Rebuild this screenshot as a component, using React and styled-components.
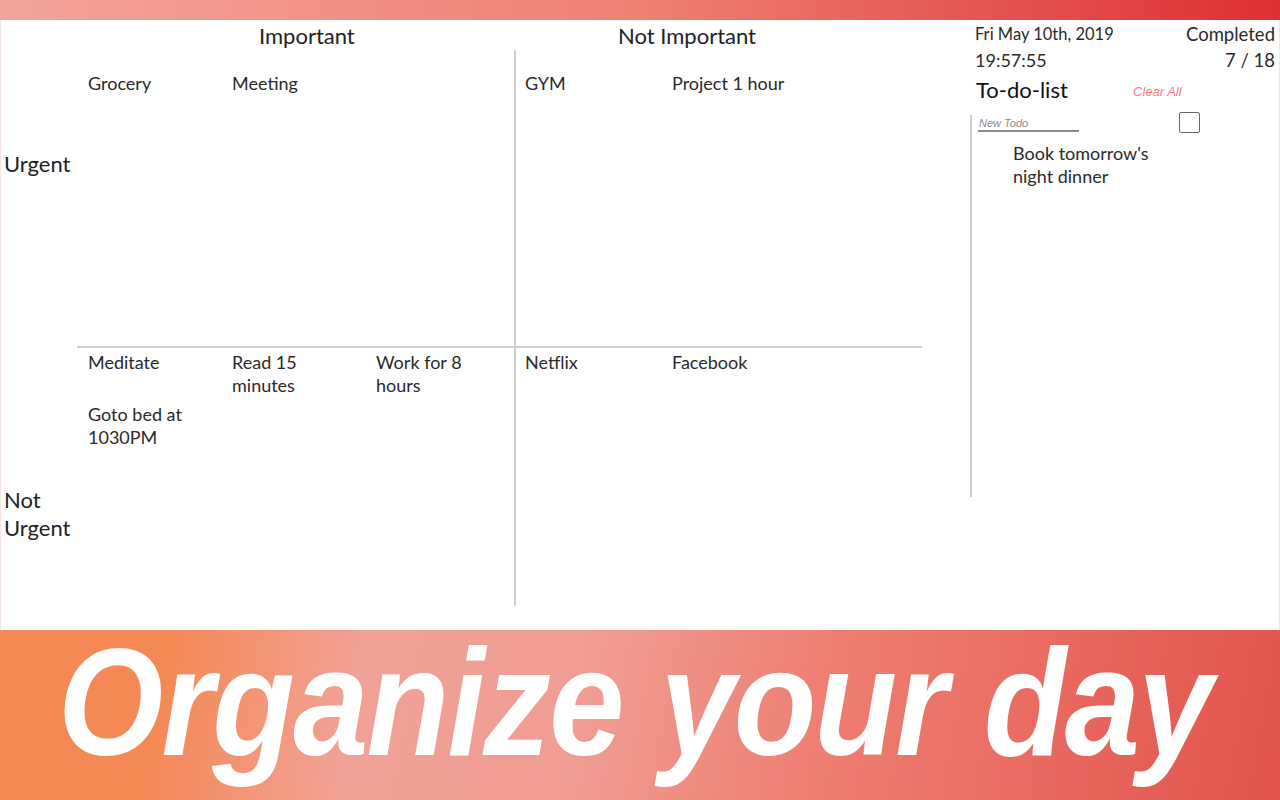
import React from "react";
import styled, { createGlobalStyle } from "styled-components";

const GlobalStyle = createGlobalStyle`
  html, body {
    margin: 0;
    padding: 0;
    background: #fff;
    font-family: Lato, "Open Sans", sans-serif;
    color: #222;
  }
`;

const quadrants = [
  { key: "ui", items: ["Grocery", "Meeting"], padTop: 22, padLeft: 11, gap: 16, divider: false, top: false },
  { key: "un", items: ["GYM", "Project 1 hour"], padTop: 22, padLeft: 9, gap: 19, divider: true, top: false },
  {
    key: "ni",
    items: ["Meditate", "Read 15 minutes", "Work for 8 hours", "Goto bed at 1030PM"],
    padTop: 3,
    padLeft: 11,
    gap: 16,
    divider: false,
    top: true,
  },
  { key: "nn", items: ["Netflix", "Facebook"], padTop: 3, padLeft: 9, gap: 19, divider: true, top: true },
];

function renderQuadrant(q) {
  return (
    <Quadrant
      key={q.key}
      padTop={q.padTop}
      padLeft={q.padLeft}
      gap={q.gap}
      divider={q.divider}
      top={q.top}
    >
      {q.items.map((it) => (
        <Task key={it}>{it}</Task>
      ))}
    </Quadrant>
  );
}

function App() {
  return (
    <Page>
      <GlobalStyle />
      <TopBar />
      <Main>
        <Matrix>
          <Corner />
          <ColHead pad={182}>Important</ColHead>
          <ColHead pad={104}>Not Important</ColHead>
          <RowHead pad={100}>Urgent</RowHead>
          {quadrants.slice(0, 2).map(renderQuadrant)}
          <RowHead pad={140}>Not Urgent</RowHead>
          {quadrants.slice(2).map(renderQuadrant)}
        </Matrix>

        <Side>
          <StatusRow>
            <Stack>
              <DateText>Fri May 10th, 2019</DateText>
              <TimeText>19:57:55</TimeText>
            </Stack>
            <Stack right>
              <CountText>Completed</CountText>
              <CountText>7 / 18</CountText>
            </Stack>
          </StatusRow>
          <TitleRow>
            <ListTitle>To-do-list</ListTitle>
            <ClearAll>Clear All</ClearAll>
          </TitleRow>
          <ListBox>
            <InputRow>
              <NewTodo placeholder="New Todo" />
              <Check />
            </InputRow>
            <TodoItem>Book tomorrow's night dinner</TodoItem>
          </ListBox>
        </Side>
      </Main>
      <Banner>
        <Slogan>Organize your day</Slogan>
      </Banner>
    </Page>
  );
}

const Page = styled.div`
  width: 1280px;
  height: 800px;
  overflow: hidden;
  display: flex;
  flex-direction: column;
`;

const TopBar = styled.div`
  height: 20px;
  flex: none;
  background: linear-gradient(90deg, #f3a49b 0%, #ef8074 50%, #dc3034 100%);
`;

const Main = styled.div`
  height: 610px;
  flex: none;
  display: flex;
  border-left: 1px solid #f6e6e3;
  border-right: 1px solid #f6e6e3;
  box-sizing: border-box;
`;

const Matrix = styled.div`
  display: grid;
  grid-template-columns: 76px 437px 408px;
  grid-template-rows: 30px 296px 260px;
  flex: none;
`;

const Corner = styled.div``;

const ColHead = styled.div`
  font-size: 22px;
  line-height: 30px;
  padding-left: ${(p) => p.pad}px;
  padding-top: 1px;
  white-space: nowrap;
`;

const RowHead = styled.div`
  font-size: 22px;
  line-height: 28px;
  padding-top: ${(p) => p.pad}px;
  padding-left: 3px;
`;

const Quadrant = styled.div`
  display: grid;
  grid-template-columns: repeat(3, 128px);
  column-gap: ${(p) => p.gap}px;
  row-gap: 6px;
  align-content: start;
  padding-top: ${(p) => p.padTop}px;
  padding-left: ${(p) => p.padLeft}px;
  border-left: ${(p) => (p.divider ? "2px solid #cfcfcf" : "none")};
  border-top: ${(p) => (p.top ? "2px solid #cfcfcf" : "none")};
  box-sizing: border-box;
  overflow: hidden;
`;

const Task = styled.div`
  font-size: 18px;
  line-height: 23px;
  color: #2a2a2a;
`;

const Side = styled.div`
  flex: 1;
  padding-left: 48px;
  padding-right: 4px;
  display: flex;
  flex-direction: column;
`;

const StatusRow = styled.div`
  display: flex;
  justify-content: space-between;
  padding-top: 1px;
`;

const Stack = styled.div`
  display: flex;
  flex-direction: column;
  align-items: ${(p) => (p.right ? "flex-end" : "flex-start")};
  padding-left: ${(p) => (p.right ? 0 : 5)}px;
`;

const DateText = styled.div`
  font-size: 16.5px;
  line-height: 26px;
  color: #2a2a2a;
`;

const TimeText = styled.div`
  font-size: 18px;
  line-height: 26px;
  color: #2a2a2a;
`;

const CountText = styled.div`
  font-size: 18.5px;
  line-height: 26px;
  color: #2a2a2a;
`;

const TitleRow = styled.div`
  display: flex;
  align-items: center;
  padding-left: 6px;
  height: 33px;
`;

const ListTitle = styled.div`
  font-size: 22px;
  color: #111;
  width: 157px;
`;

const ClearAll = styled.div`
  font-family: "Liberation Sans", Arial, sans-serif;
  font-style: italic;
  font-size: 13px;
  color: #ff7a80;
  padding-top: 4px;
`;

const ListBox = styled.div`
  margin-top: 9px;
  width: 250px;
  height: 382px;
  border-left: 2px solid #cfcfcf;
  box-sizing: border-box;
  padding-left: 6px;
`;

const InputRow = styled.div`
  display: flex;
  align-items: flex-start;
`;

const NewTodo = styled.input`
  width: 100px;
  height: 15px;
  margin-top: 0;
  padding: 0 0 0 1px;
  border: none;
  border-bottom: 2px solid #8a8a8a;
  outline: none;
  font-family: "Liberation Sans", Arial, sans-serif;
  font-style: italic;
  font-size: 11px;
  &::placeholder {
    color: #8a8a8a;
  }
`;

const Check = styled.div`
  width: 19px;
  height: 19px;
  margin-left: 100px;
  margin-top: -3px;
  border: 1.5px solid #666;
  border-radius: 2px;
`;

const TodoItem = styled.div`
  width: 150px;
  margin-left: 35px;
  margin-top: 9px;
  font-size: 18px;
  line-height: 23px;
  color: #2a2a2a;
`;

const Banner = styled.div`
  height: 170px;
  flex: none;
  background: linear-gradient(
    100deg,
    #f58955 0%,
    #f58955 13%,
    #f1a196 28%,
    #f09d93 45%,
    #ee7d70 65%,
    #e2534d 100%
  );
`;

const Slogan = styled.div`
  font-family: "Liberation Sans", Arial, sans-serif;
  font-weight: 700;
  font-style: italic;
  font-size: 152px;
  line-height: 170px;
  height: 170px;
  color: #fff;
  margin-left: 58px;
  margin-top: -13px;
  white-space: nowrap;
  letter-spacing: -2px;
  word-spacing: 2px;
  transform: scaleX(0.89);
  transform-origin: left center;
`;

export default App;
